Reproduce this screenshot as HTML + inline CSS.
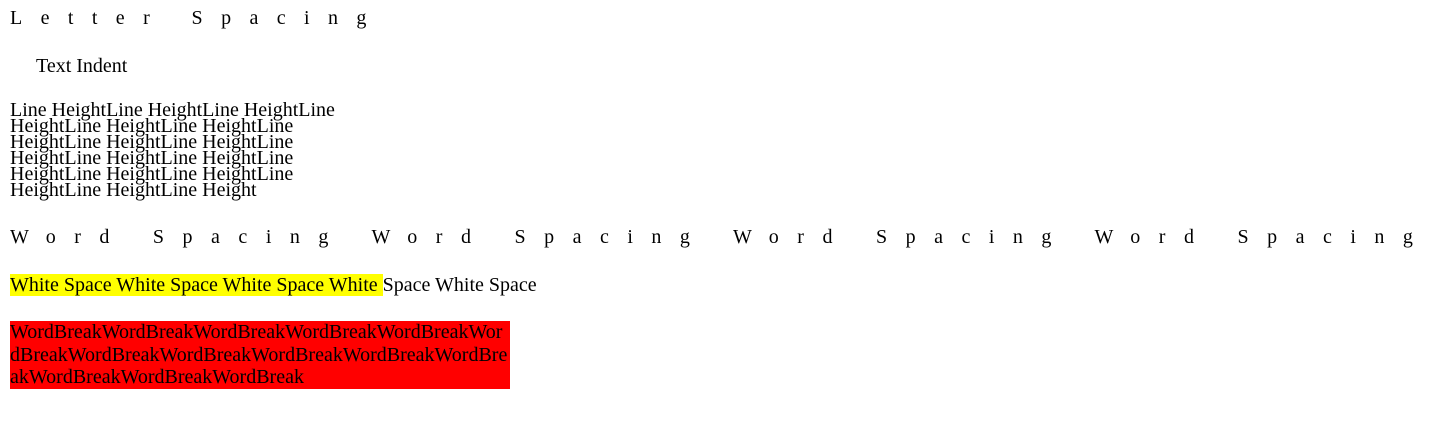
<!DOCTYPE html>
<html><head><meta charset="utf-8"><style>
body{margin:0;width:1435px;height:427px;background:#fff;font-family:"Liberation Serif",serif;font-size:20px;color:#000;position:relative;overflow:hidden}
.a{position:absolute;left:10px;white-space:nowrap;line-height:22px}
</style></head><body>
<div class="a" style="top:7px;letter-spacing:18.4px">Letter Spacing</div>
<div class="a" style="top:55px;text-indent:26px">Text Indent</div>
<div class="a" style="top:102px;width:330px;white-space:normal;line-height:16px">Line HeightLine HeightLine HeightLine HeightLine HeightLine HeightLine HeightLine HeightLine HeightLine HeightLine HeightLine HeightLine HeightLine HeightLine HeightLine HeightLine HeightLine Height</div>
<div class="a" style="top:226px;letter-spacing:18.5px;word-spacing:1.5px">Word Spacing Word Spacing Word Spacing Word Spacing</div>
<div class="a" style="top:274px"><span style="background:#ff0">White Space White Space White Space White </span>Space White Space</div>
<div class="a" style="top:321px;width:500px;white-space:normal;word-break:break-all;background:#f00;line-height:22.7px">WordBreakWordBreakWordBreakWordBreakWordBreakWordBreakWordBreakWordBreakWordBreakWordBreakWordBreakWordBreakWordBreakWordBreak</div>
</body></html>
